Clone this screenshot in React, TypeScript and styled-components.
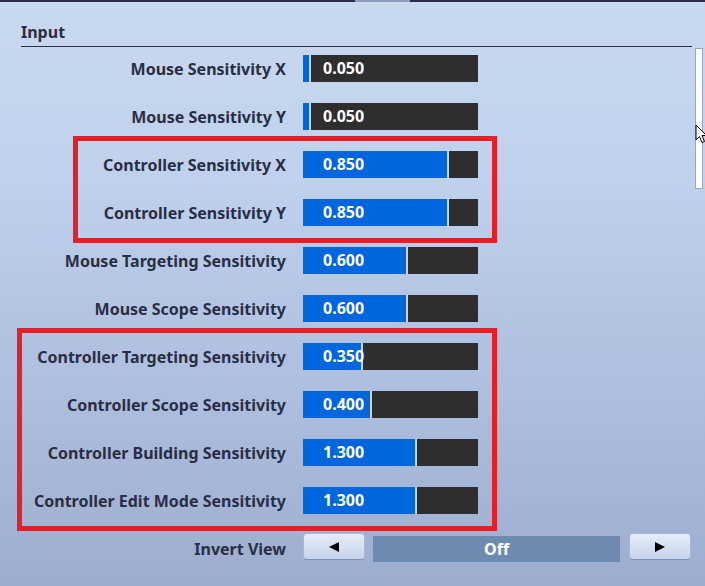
import styled, { createGlobalStyle } from 'styled-components';

const GlobalStyle = createGlobalStyle`
  html, body {
    margin: 0;
    padding: 0;
  }
  body {
    font-family: 'Noto Sans', 'DejaVu Sans', sans-serif;
  }
  * {
    box-sizing: border-box;
  }
`;

const TEXT_DARK = '#2a2e44';
const BLUE = '#0066de';
const TRACK = '#2e2e2e';
const RED = '#ec1c24';

const Page = styled.div`
  position: relative;
  width: 705px;
  height: 586px;
  overflow: hidden;
  display: flex;
  flex-direction: column;
  background: linear-gradient(180deg, #c9d9ef 0%, #bfd1ec 30%, #aebfdf 65%, #9cadcf 100%);
`;

const TopStrip = styled.div`
  height: 2px;
  flex-shrink: 0;
  display: flex;
  background: ${TEXT_DARK};
`;

const TopStripThumb = styled.div`
  width: 55px;
  margin-left: 355px;
  background: #8e9cc0;
`;

const Body = styled.div`
  flex: 1;
  display: flex;
`;

const Content = styled.div`
  flex: 1;
  padding-left: 21px;
  display: flex;
  flex-direction: column;
`;

const SectionTitle = styled.div`
  padding-top: 18px;
  padding-bottom: 2px;
  border-bottom: 1px solid ${TEXT_DARK};
  font-size: 16px;
  line-height: 24px;
  font-weight: 700;
  color: ${TEXT_DARK};
`;

const Rows = styled.div`
  display: flex;
  flex-direction: column;
  gap: 21px;
  padding-top: 8px;
`;

const Highlight = styled.div<{ $left: number }>`
  position: relative;
  display: flex;
  flex-direction: column;
  gap: 21px;

  &::after {
    content: '';
    position: absolute;
    top: -15px;
    bottom: -17px;
    left: ${(p) => p.$left}px;
    right: 195px;
    border: 5px solid ${RED};
    pointer-events: none;
  }
`;

const Row = styled.div`
  display: flex;
  align-items: center;
  height: 27px;
`;

const Label = styled.div`
  width: 265px;
  margin-right: 17px;
  text-align: right;
  font-size: 16px;
  font-weight: 700;
  color: ${TEXT_DARK};
  white-space: nowrap;
`;

const Slider = styled.div`
  position: relative;
  width: 175px;
  height: 27px;
  background: ${TRACK};
  display: flex;
`;

const SliderFill = styled.div`
  height: 100%;
  background: ${BLUE};
  border-right: 2px solid #cdd2da;
`;

const SliderValue = styled.span`
  position: absolute;
  left: 20px;
  top: 0;
  line-height: 27px;
  font-size: 16px;
  font-weight: 700;
  color: #fff;
`;

const ArrowButton = styled.button`
  width: 62px;
  height: 27px;
  margin-top: -2px;
  align-self: flex-start;
  padding: 0;
  display: flex;
  align-items: center;
  justify-content: center;
  border: 1px solid #a9b7d4;
  border-bottom-color: #7f90b6;
  border-radius: 4px;
  background: linear-gradient(180deg, #e6edf8 0%, #c5d3eb 100%);
`;

const OptionValue = styled.div`
  width: 247px;
  height: 26px;
  margin: 0 9px 0 8px;
  background: #6f8ab0;
  display: flex;
  align-items: center;
  justify-content: center;
  font-size: 16px;
  font-weight: 700;
  color: #fff;
`;

const ScrollTrack = styled.div`
  width: 8px;
  height: 141px;
  margin: 46px 2px 0 3px;
  background: #fff;
  border: 1px solid #9aa6bd;
`;

const Cursor = styled.svg`
  position: absolute;
  left: 695px;
  top: 124px;
`;

type SliderSetting = {
  label: string;
  value: string;
  fill: number;
};

const mouseRows: SliderSetting[] = [
  { label: 'Mouse Sensitivity X', value: '0.050', fill: 8 },
  { label: 'Mouse Sensitivity Y', value: '0.050', fill: 8 },
];

const controllerRows: SliderSetting[] = [
  { label: 'Controller Sensitivity X', value: '0.850', fill: 146 },
  { label: 'Controller Sensitivity Y', value: '0.850', fill: 146 },
];

const targetingRows: SliderSetting[] = [
  { label: 'Mouse Targeting Sensitivity', value: '0.600', fill: 105 },
  { label: 'Mouse Scope Sensitivity', value: '0.600', fill: 105 },
];

const controllerTargetRows: SliderSetting[] = [
  { label: 'Controller Targeting Sensitivity', value: '0.350', fill: 60 },
  { label: 'Controller Scope Sensitivity', value: '0.400', fill: 69 },
  { label: 'Controller Building Sensitivity', value: '1.300', fill: 114 },
  { label: 'Controller Edit Mode Sensitivity', value: '1.300', fill: 114 },
];

const SliderRow = ({ label, value, fill }: SliderSetting) => (
  <Row>
    <Label>{label}</Label>
    <Slider>
      <SliderFill style={{ width: fill }} />
      <SliderValue>{value}</SliderValue>
    </Slider>
  </Row>
);

const Triangle = ({ dir }: { dir: 'left' | 'right' }) => (
  <svg width="12" height="12" viewBox="0 0 12 12">
    {dir === 'left' ? <path d="M1 6 L11 1 L11 11 Z" fill="#000" /> : <path d="M11 6 L1 1 L1 11 Z" fill="#000" />}
  </svg>
);

export default function App() {
  return (
    <>
      <GlobalStyle />
      <Page>
        <TopStrip>
          <TopStripThumb />
        </TopStrip>
        <Body>
          <Content>
            <SectionTitle>Input</SectionTitle>
            <Rows>
              {mouseRows.map((r) => (
                <SliderRow key={r.label} {...r} />
              ))}
              <Highlight $left={52}>
                {controllerRows.map((r) => (
                  <SliderRow key={r.label} {...r} />
                ))}
              </Highlight>
              {targetingRows.map((r) => (
                <SliderRow key={r.label} {...r} />
              ))}
              <Highlight $left={-4}>
                {controllerTargetRows.map((r) => (
                  <SliderRow key={r.label} {...r} />
                ))}
              </Highlight>
              <Row>
                <Label>Invert View</Label>
                <ArrowButton>
                  <Triangle dir="left" />
                </ArrowButton>
                <OptionValue>Off</OptionValue>
                <ArrowButton>
                  <Triangle dir="right" />
                </ArrowButton>
              </Row>
            </Rows>
          </Content>
          <ScrollTrack />
        </Body>
        <Cursor width="12" height="20" viewBox="0 0 12 20">
          <path d="M1 1 L1 16 L4.5 12.5 L7 18.5 L9.5 17.5 L7 11.5 L11.5 11.5 Z" fill="#fff" stroke="#000" strokeWidth="1" />
        </Cursor>
      </Page>
    </>
  );
}
